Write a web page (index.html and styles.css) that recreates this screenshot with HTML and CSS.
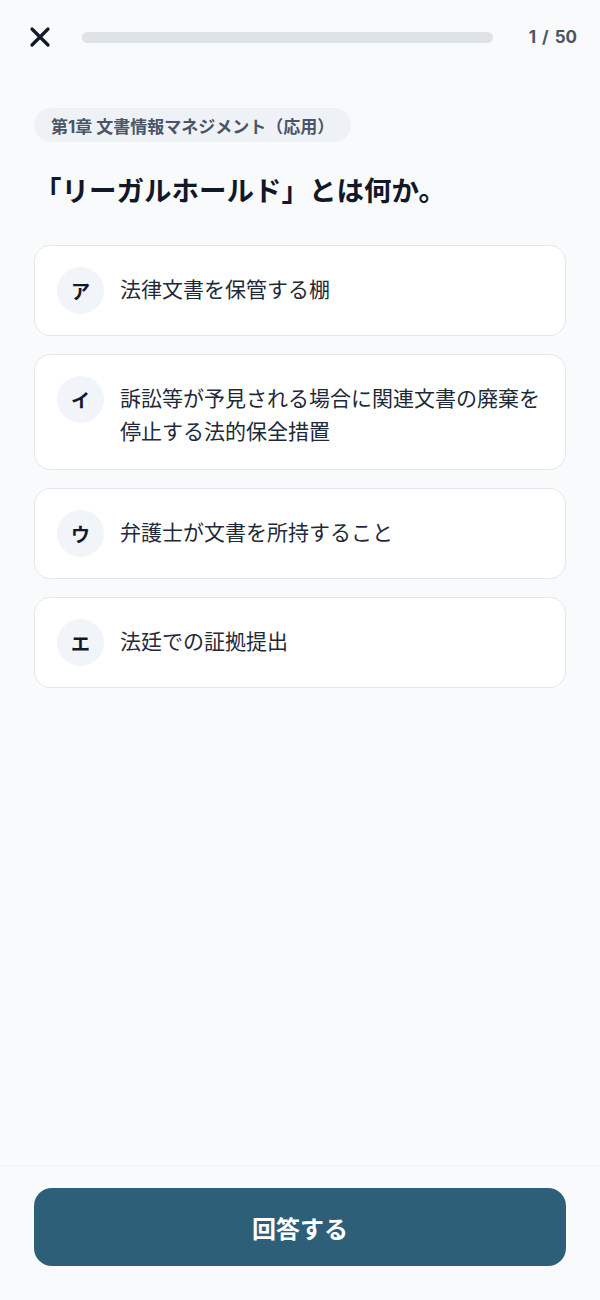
FILE: index.html
```html
<!DOCTYPE html>
<html lang="ja">
<head>
<meta charset="utf-8">
<title>Quiz</title>
<link rel="stylesheet" href="styles.css">
</head>
<body>
<div class="screen">
  <header class="topbar">
    <button class="close" aria-label="閉じる">
      <svg width="22" height="22" viewBox="0 0 22 22"><path d="M3 3 L19 19 M19 3 L3 19" stroke="#111827" stroke-width="3.2" stroke-linecap="round" fill="none"/></svg>
    </button>
    <div class="progress"><div class="progress-fill" style="width:0%"></div></div>
    <div class="count">1 / 50</div>
  </header>

  <main class="content">
    <div class="chip">第1章 文書情報マネジメント（応用）</div>
    <h1 class="question">「リーガルホールド」とは何か。</h1>

    <ul class="options">
      <li class="option"><span class="badge">ア</span><span class="opt-text">法律文書を保管する棚</span></li>
      <li class="option"><span class="badge">イ</span><span class="opt-text">訴訟等が予見される場合に関連文書の廃棄を停止する法的保全措置</span></li>
      <li class="option"><span class="badge">ウ</span><span class="opt-text">弁護士が文書を所持すること</span></li>
      <li class="option"><span class="badge">エ</span><span class="opt-text">法廷での証拠提出</span></li>
    </ul>
  </main>

  <footer class="footer">
    <button class="submit">回答する</button>
  </footer>
</div>
</body>
</html>
```

FILE: styles.css
```css
* { box-sizing: border-box; }
html, body {
  margin: 0;
  padding: 0;
  background: #f9fafb;
}
body {
  font-family: Inter, "Noto Sans CJK JP", "Noto Sans", sans-serif;
  color: #111827;
}
.screen {
  height: 1300px;
  display: flex;
  flex-direction: column;
}
.topbar {
  display: flex;
  align-items: center;
  height: 40px;
  margin-top: 17px;
  padding: 0 23px 0 29px;
}
.close {
  width: 22px;
  height: 22px;
  padding: 0;
  border: 0;
  background: none;
  display: flex;
}
.progress {
  flex: 1;
  height: 11px;
  margin: 0 36px 0 31px;
  background: #dde3e6;
  border-radius: 6px;
  overflow: hidden;
}
.progress-fill {
  height: 100%;
  background: #2e5f78;
}
.count {
  font-size: 17px;
  font-weight: 700;
  color: #4b5563;
  word-spacing: 2px;
}
.content {
  flex: 1;
  padding: 51px 34px 0;
}
.chip {
  display: inline-flex;
  align-items: center;
  height: 34px;
  padding: 0 17px;
  border-radius: 17px;
  background: #eef2f7;
  color: #4a5568;
  font-size: 17px;
  font-weight: 700;
}
.question {
  margin: 29px 0 34px;
  font-size: 27.5px;
  line-height: 40px;
  font-weight: 700;
  color: #111827;
}
.options {
  list-style: none;
  margin: 0;
  padding: 0;
  display: flex;
  flex-direction: column;
  gap: 18px;
}
.option {
  display: flex;
  align-items: flex-start;
  gap: 16px;
  padding: 21px 24px 21px 22px;
  background: #ffffff;
  border: 1px solid #e5e7eb;
  border-radius: 16px;
}
.badge {
  flex: none;
  width: 47px;
  height: 47px;
  border-radius: 50%;
  background: #f1f5f9;
  display: flex;
  align-items: center;
  justify-content: center;
  font-size: 19px;
  font-weight: 700;
  color: #111827;
}
.opt-text {
  padding-top: 6px;
  font-size: 21px;
  line-height: 33px;
  color: #1f2937;
}
.footer {
  border-top: 1px solid #f0f2f4;
  padding: 22px 34px 34px;
}
.submit {
  width: 100%;
  height: 78px;
  border: 0;
  border-radius: 18px;
  background: #2e5f78;
  color: #ffffff;
  font-family: inherit;
  font-size: 24px;
  font-weight: 700;
}
```
